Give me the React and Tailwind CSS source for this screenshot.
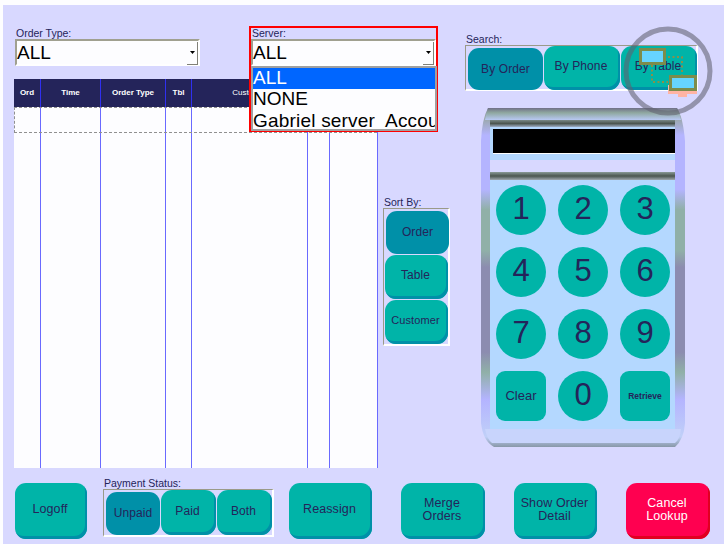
import React from "react";

const INK = "text-[#24245a]";
const groupBox = "border border-[#9a9a88] border-r-white border-b-white border-r-2 border-b-2";

function Btn({ className = "", children, selected, red }) {
  const tone = red
    ? "bg-[#ff0050] text-white shadow-[inset_-2px_-3px_0_#e00020] pb-[3px] pr-[2px]"
    : selected
    ? `bg-[#0090a8] ${INK}`
    : `bg-[#00b4a8] ${INK} shadow-[inset_-2px_-3px_0_#0090a8] pb-[3px] pr-[2px]`;
  return (
    <button className={`flex shrink-0 items-center justify-center rounded-[11px] text-center text-[12.5px] leading-[13px] tracking-[0.1px] ${tone} ${className}`}>
      <span>{children}</span>
    </button>
  );
}

function Select({ value }) {
  return (
    <div className="flex h-[27px] w-[185px] items-center justify-between border-2 border-[#a0a090] border-r-white border-b-white bg-[#fdfdff] text-[19px] leading-[22px] text-black">
      <span>{value}</span>
      <span className="mb-[-1px] flex h-[23px] w-[11px] items-center justify-center border-r border-b border-[#808078]">
        <svg width="5" height="3" viewBox="0 0 5 3"><path d="M0 0H5L2.5 3Z" fill="#000" /></svg>
      </span>
    </div>
  );
}

const cols = "grid grid-cols-[27px_60px_65px_26px_116px_22px_48px]";

function Row({ className = "", line, cells = [], textClass = "" }) {
  return (
    <div className={`${cols} ${className}`}>
      {[0, 1, 2, 3, 4, 5, 6].map((i) => (
        <div key={i} className={`flex items-center justify-center overflow-hidden whitespace-nowrap border-r ${line} ${textClass}`}>
          {cells[i]}
        </div>
      ))}
    </div>
  );
}

function Key({ children, square, small }) {
  return (
    <button className={`flex h-[50px] w-[50px] items-center justify-center bg-[#00b4a8] ${INK} ${square ? "rounded-[9px]" : "rounded-full pb-[2px]"} ${small ? "text-[8.5px] font-bold" : square ? "text-[13px]" : "text-[31px]"}`}>
      {children}
    </button>
  );
}

function Casing() {
  return (
    <svg className="absolute left-0 top-0" width="205" height="341" viewBox="0 0 205 341">
      <defs>
        <linearGradient id="side" x1="0" y1="0" x2="0" y2="1">
          <stop offset="0" stopColor="#8a92a8" />
          <stop offset="0.03" stopColor="#9aa8a8" />
          <stop offset="0.08" stopColor="#b4b4ff" />
          <stop offset="0.24" stopColor="#b4b4ff" />
          <stop offset="0.3" stopColor="#90b0a8" />
          <stop offset="0.42" stopColor="#90b0a8" />
          <stop offset="0.47" stopColor="#8c8cb0" />
          <stop offset="0.72" stopColor="#8c8cb0" />
          <stop offset="0.78" stopColor="#90b0a8" />
          <stop offset="0.86" stopColor="#b4b4ff" />
          <stop offset="0.97" stopColor="#c0d0f8" />
          <stop offset="1" stopColor="#8898a8" />
        </linearGradient>
        <linearGradient id="top" x1="0" y1="0" x2="0" y2="1">
          <stop offset="0" stopColor="#707088" />
          <stop offset="0.4" stopColor="#8fa8a0" />
          <stop offset="1" stopColor="#b8c8f4" />
        </linearGradient>
      </defs>
      <path d="M8 1H197Q203 10 205 34V316Q204 332 195 340H14Q3 334 1 316V34Q2 12 8 1Z" fill="url(#side)" />
      <path d="M8 1H197Q200 6 201 13H5Q6 6 8 1Z" fill="url(#top)" />
      <path d="M5 322H201Q200 332 195 336H12Q7 332 5 322Z" fill="#c8d4fc" />
      <path d="M10 13H195V322H10Z" fill="#b4d8ff" />
    </svg>
  );
}

function Calculator() {
  return (
    <div className="relative ml-[15px] mt-[16px] h-[341px] w-[205px]">
      <Casing />
      <div className="relative mx-[10px] flex flex-col pt-[13px]">
        <div className="h-[7px] bg-gradient-to-b from-[#7a8a88] via-[#4c5650] to-[#a0b0c8]" />
        <div className="h-[33px] bg-[#b4d8ff] pl-[3px] pt-[2px]">
          <div className="h-[25px] border-b border-white bg-black" />
        </div>
        <div className="h-[12px] bg-[#d8d8ff]" />
        <div className="h-[8px] bg-gradient-to-b from-[#8a9a98] via-[#4c5650] to-[#a0a8b0]" />
        <div className="grid h-[249px] grid-cols-[50px_50px_50px] content-start gap-x-[12px] gap-y-[12px] bg-[#b4d8ff] pl-[6px] pt-[5px]">
          {["1", "2", "3", "4", "5", "6", "7", "8", "9"].map((k) => (
            <Key key={k}>{k}</Key>
          ))}
          <Key square>Clear</Key>
          <Key>0</Key>
          <Key square small>Retrieve</Key>
        </div>
      </div>
    </div>
  );
}

function Overlay() {
  return (
    <svg className="absolute left-[620px] top-[20px]" width="104" height="100" viewBox="620 20 104 100">
      <rect x="668" y="85" width="29" height="9" fill="#ffb4a4" />
      <rect x="678" y="92" width="9" height="5" fill="#ffb4a4" />
      <path d="M668 57H682V75M652 65V82H668" fill="none" stroke="#b8822a" strokeWidth="1.5" strokeDasharray="2 2.5" />
      <rect x="640.5" y="49.5" width="24" height="14" fill="#66d4ff" stroke="#7c8c4c" strokeWidth="3" />
      <rect x="670.5" y="76.5" width="25" height="13" fill="#66d4ff" stroke="#7c8c4c" strokeWidth="3" />
      <circle cx="668" cy="71" r="42" fill="none" stroke="#606070" strokeOpacity="0.58" strokeWidth="5" />
    </svg>
  );
}

export default function App() {
  return (
    <div className="relative h-[544px] w-[724px] overflow-hidden bg-[#fdfdff] pl-[3px] pt-[5px] [font-family:'Liberation_Sans',Arial,sans-serif]">
      <div className="flex h-[539px] flex-col bg-[#d8d8ff]">
        <div className="flex h-[473px]">
          {/* Left column */}
          <div className="ml-[11px] w-[363px] shrink-0 pt-[23px]">
            <div className="flex h-[37px]">
              <div className="ml-[1px] w-[236px] shrink-0">
                <div className={`h-[11px] pl-[1px] text-[10.5px] leading-[11px] ${INK}`}>Order Type:</div>
                <Select value="ALL" />
              </div>
              <div className="relative z-10 w-[185px] shrink-0">
                <div className="absolute left-[-2px] top-[-2px] h-[106px] w-[189px] border-2 border-[#ff0000] bg-[#d8d8ff]" />
                <div className={`relative h-[11px] pl-[1px] text-[10.5px] leading-[11px] ${INK}`}>Server:</div>
                <div className="relative">
                  <Select value="ALL" />
                  <div className="absolute left-0 top-[27px] h-[65px] w-[186px] overflow-hidden whitespace-nowrap border-2 border-[#a0a0a0] bg-[#fdfdff] text-[19px] text-black">
                    <div className="h-[21px] bg-[#0066ff] leading-[19px] text-white">ALL</div>
                    <div className="h-[21px] leading-[19px]">NONE</div>
                    <div className="h-[21px] whitespace-pre leading-[21px] tracking-[0.2px]">Gabriel server  Account</div>
                  </div>
                </div>
              </div>
            </div>
            <div className="mt-[14px] flex h-[389px] flex-col bg-[#fdfdff]">
              <Row
                className="h-[28px] bg-[#24245a]"
                line="border-[#3030f0]"
                textClass="text-[8px] font-bold text-white"
                cells={["Ord", "Time", "Order Type", "Tbl", <span className="font-normal">Customer</span>, "", ""]}
              />
              <Row className="h-[26px] outline-1 -outline-offset-1 outline-dashed outline-[#909090]" line="border-[#6a6aff]" />
              <Row className="flex-1" line="border-[#6a6aff]" />
            </div>
          </div>

          {/* Sort column */}
          <div className="ml-[6px] w-[67px] shrink-0 pt-[192px]">
            <div className={`h-[11px] pl-[1px] text-[10.5px] leading-[11px] ${INK}`}>Sort By:</div>
            <div className={`flex h-[138px] flex-col ${groupBox}`}>
              <Btn selected className="ml-[2px] mt-[2px] h-[43px] w-[63px] !text-[12px]">Order</Btn>
              <Btn className="ml-[1px] mt-[1px] h-[44px] w-[63px] !text-[12px]">Table</Btn>
              <Btn className="ml-[1px] mt-[1px] h-[44px] w-[63px] !text-[11px]">Customer</Btn>
            </div>
          </div>

          {/* Right column */}
          <div className="ml-[15px] w-[233px] shrink-0 pt-[29px]">
            <div className={`h-[11px] pl-[1px] text-[10.5px] leading-[11px] ${INK}`}>Search:</div>
            <div className={`flex h-[46px] items-start ${groupBox}`}>
              <Btn selected className="ml-[2px] mt-[2px] h-[42px] w-[75px] !text-[12px]">By Order</Btn>
              <Btn className="ml-[1px] h-[44px] w-[76px] !text-[12px]">By Phone</Btn>
              <Btn className="ml-[1px] h-[44px] w-[76px] !text-[12px]">By Table</Btn>
            </div>
            <Calculator />
          </div>
        </div>

        {/* Bottom bar */}
        <div className="flex h-[66px] items-start pl-[12px]">
          <Btn className="mt-[5px] h-[56px] w-[72px]">Logoff</Btn>
          <div className="ml-[16px] w-[171px] shrink-0">
            <div className={`h-[11px] pl-[1px] text-[10.5px] leading-[11px] ${INK}`}>Payment Status:</div>
            <div className={`flex h-[48px] items-start ${groupBox}`}>
              <Btn selected className="ml-[2px] mt-[2px] h-[43px] w-[54px] !text-[12px]">Unpaid</Btn>
              <Btn className="ml-[1px] h-[45px] w-[55px] !text-[12px]">Paid</Btn>
              <Btn className="ml-[1px] h-[45px] w-[55px] !text-[12px]">Both</Btn>
            </div>
          </div>
          <Btn className="ml-[15px] mt-[5px] h-[56px] w-[83px]">Reassign</Btn>
          <Btn className="ml-[29px] mt-[5px] h-[56px] w-[84px]">Merge<br />Orders</Btn>
          <Btn className="ml-[29px] mt-[5px] h-[56px] w-[83px]">Show Order<br />Detail</Btn>
          <Btn red className="ml-[29px] mt-[5px] h-[56px] w-[84px]">Cancel<br />Lookup</Btn>
        </div>
      </div>
      <Overlay />
    </div>
  );
}
